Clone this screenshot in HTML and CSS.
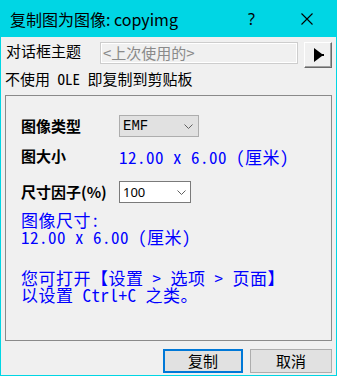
FILE: index.html
```html
<!DOCTYPE html>
<html>
<head>
  <title>复制图为图像</title>
  <meta charset="utf-8">
  <link rel="stylesheet" href="styles.css">
</head>
<body>

  <div class="window">
    <div class="titlebar">
      <span class="title">复制图为图像: copyimg</span>
      <span class="help">?</span>
      <svg class="close" width="12" height="12" viewBox="0 0 12 12">
        <path d="M0.5 0.5 L11.5 11.5 M11.5 0.5 L0.5 11.5" stroke="#000" stroke-width="1.1" fill="none"/>
      </svg>
    </div>

    <div class="client">
      <div class="theme-row">
        <span class="theme-label">对话框主题</span>
        <div class="theme-input">&lt;上次使用的&gt;</div>
        <button class="arrow-btn">
          <svg width="11" height="14" viewBox="0 0 11 14">
            <polygon points="0,0 8,6 10,6 10,8 8,8 0,14" fill="#000"/>
          </svg>
        </button>
      </div>

      <div class="note">不使用 OLE 即复制到剪贴板</div>

      <div class="group">
        <div class="field-row row-type">
          <span class="field-label">图像类型</span>
          <div class="select select-grey">
            <span class="select-text emf">EMF</span>
            <svg class="chevron" width="9" height="5" viewBox="0 0 9 5">
              <polyline points="0.5,0.5 4.5,4.5 8.5,0.5" stroke="#606060" fill="none"/>
            </svg>
          </div>
        </div>
        <div class="field-row row-size">
          <span class="field-label">图大小</span>
          <span class="blue-text">12.00 x 6.00 (厘米)</span>
        </div>
        <div class="field-row row-scale">
          <span class="field-label">尺寸因子(%)</span>
          <div class="select select-white">
            <span class="select-text">100</span>
            <svg class="chevron" width="9" height="5" viewBox="0 0 9 5">
              <polyline points="0.5,0.5 4.5,4.5 8.5,0.5" stroke="#606060" fill="none"/>
            </svg>
          </div>
        </div>

        <div class="blue-text info">图像尺寸:<br>12.00 x 6.00 (厘米)</div>
        <div class="blue-text hint">您可打开【设置 &gt; 选项 &gt; 页面】<br>以设置 Ctrl+C 之类。</div>
      </div>

      <div class="actions">
        <button class="btn btn-default">复制</button>
        <button class="btn btn-cancel">取消</button>
      </div>
    </div>
  </div>

</body>
</html>
```

FILE: styles.css
```css
body {
  margin: 0;
  background-color: #f0f0f0;
  font-family: "Noto Sans CJK SC", sans-serif;
}
.window {
  width: 337px;
  height: 376px;
  box-sizing: border-box;
  border: 1px solid #00d6e4;
  border-top: none;
  background-color: #f0f0f0;
}
.titlebar {
  height: 37px;
  background-color: #00d6e4;
  display: flex;
  align-items: center;
}
.title {
  flex: 1;
  padding-left: 9px;
  font-size: 16px;
  line-height: 20px;
  color: #000;
}
.help {
  font-family: "Noto Sans", sans-serif;
  font-size: 16px;
  line-height: 20px;
  margin-right: 46px;
}
.close {
  margin-right: 23px;
}
.client {
  padding: 5px 4px 0 4px;
}
.theme-row {
  display: flex;
  align-items: flex-start;
  height: 26px;
}
.theme-label {
  width: 94px;
  margin-left: 1px;
  font-size: 15px;
  line-height: 17px;
}
.theme-input {
  width: 198px;
  height: 22px;
  box-sizing: border-box;
  border: 1px solid #cdcdcd;
  box-shadow: inset 0 0 0 1px #fff;
  padding-left: 2px;
  font-size: 15px;
  line-height: 19px;
  color: #8a8a8a;
}
.arrow-btn {
  width: 28px;
  height: 26px;
  margin-left: 6px;
  padding: 0 0 0 2px;
  box-sizing: border-box;
  background-color: #f0f0f0;
  border: 1px solid;
  border-color: #fff #696969 #696969 #fff;
  box-shadow: inset -1px -1px 0 #a0a0a0;
  display: flex;
  align-items: center;
  justify-content: center;
}
.note {
  margin-top: 1px;
  font-family: "Noto Sans Mono CJK SC", "Liberation Mono", "Noto Sans CJK SC", monospace;
  font-size: 15px;
  line-height: 20px;
}
.group {
  margin-top: 6px;
  height: 246px;
  box-sizing: border-box;
  border: 1px solid #8a8a8a;
  padding: 19px 0 0 15px;
}
.field-row {
  display: flex;
  align-items: center;
  height: 22px;
}
.row-size {
  margin-top: 8px;
}
.row-scale {
  margin-top: 14px;
}
.field-label {
  width: 98px;
  font-size: 15px;
  font-weight: bold;
  line-height: 18px;
}
.select {
  height: 22px;
  box-sizing: border-box;
  display: flex;
  align-items: center;
  justify-content: space-between;
  padding: 0 5px 0 3px;
}
.select-grey {
  width: 80px;
  background-color: #e1e1e1;
  border: 1px solid #adadad;
}
.select-white {
  width: 72px;
  background-color: #fff;
  border: 1px solid #7a7a7a;
  padding-right: 4px;
}
.select-text {
  font-family: "Noto Sans", sans-serif;
  font-size: 13px;
  line-height: 16px;
}
.select-text.emf {
  font-family: "Liberation Mono", monospace;
  font-size: 14px;
}
.blue-text {
  font-family: "Noto Sans Mono CJK SC", "Liberation Mono", "Noto Sans CJK SC", monospace;
  font-size: 17px;
  letter-spacing: 0.5px;
  line-height: 17px;
  color: #0000ff;
}
.info {
  margin-top: 8px;
}
.hint {
  margin-top: 24px;
}
.actions {
  display: flex;
  justify-content: flex-end;
  gap: 7px;
  margin-top: 8px;
}
.btn {
  height: 24px;
  box-sizing: border-box;
  background-color: #e1e1e1;
  font-family: "Noto Sans CJK SC", sans-serif;
  font-size: 15px;
  line-height: 18px;
  padding: 0;
  color: #000;
}
.btn-default {
  width: 80px;
  border: 2px solid #0078d7;
}
.btn-cancel {
  width: 82px;
  border: 1px solid #adadad;
}
```
